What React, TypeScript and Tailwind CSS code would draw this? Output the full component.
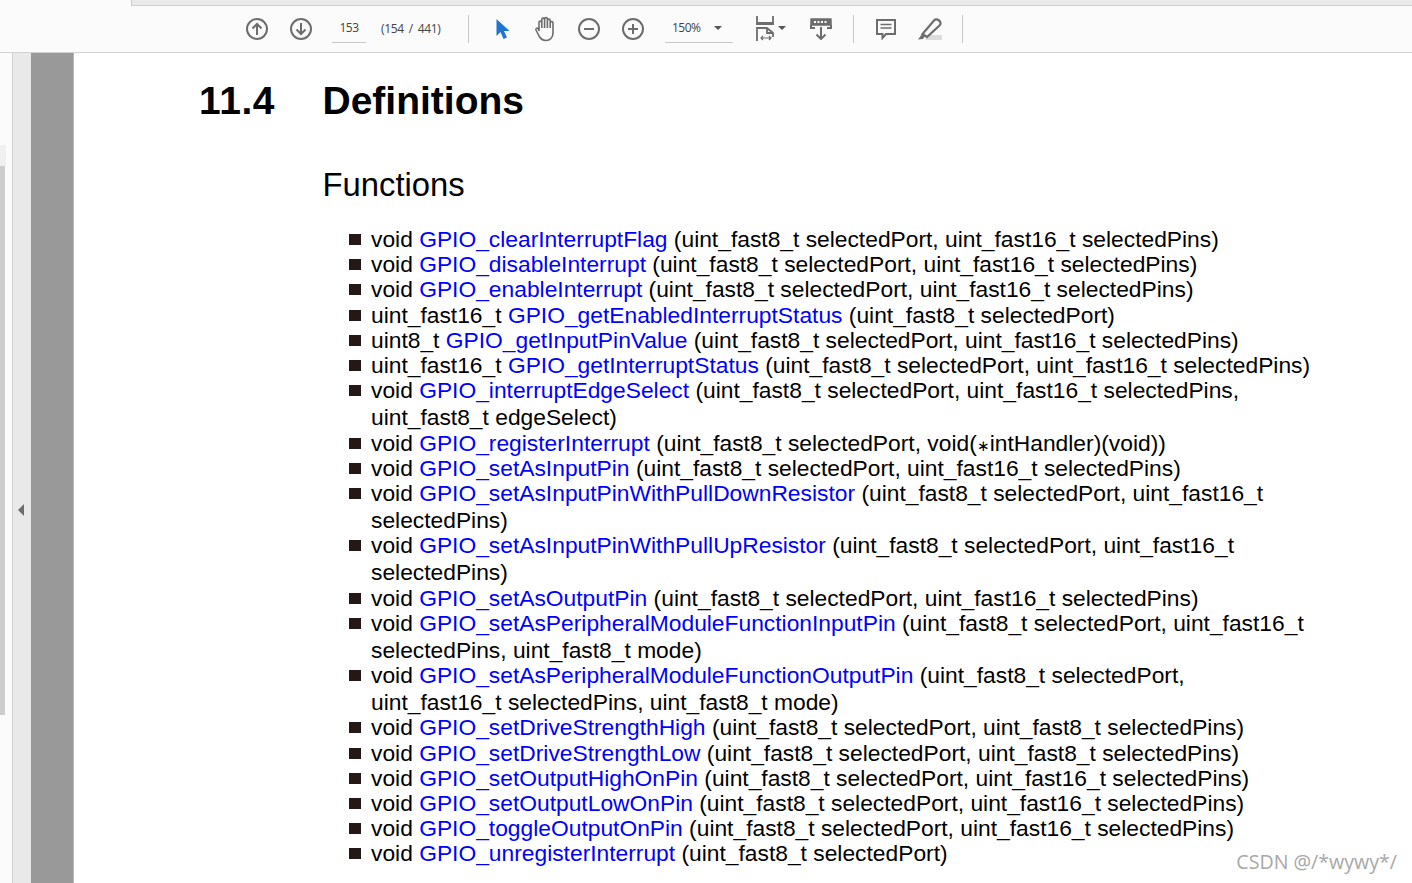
import React from 'react';

type Fn = { pre: string; name: string; rest: React.ReactNode; more?: string };

const fns: Fn[] = [
  { pre: 'void', name: 'GPIO_clearInterruptFlag', rest: '(uint_fast8_t selectedPort, uint_fast16_t selectedPins)' },
  { pre: 'void', name: 'GPIO_disableInterrupt', rest: '(uint_fast8_t selectedPort, uint_fast16_t selectedPins)' },
  { pre: 'void', name: 'GPIO_enableInterrupt', rest: '(uint_fast8_t selectedPort, uint_fast16_t selectedPins)' },
  { pre: 'uint_fast16_t', name: 'GPIO_getEnabledInterruptStatus', rest: '(uint_fast8_t selectedPort)' },
  { pre: 'uint8_t', name: 'GPIO_getInputPinValue', rest: '(uint_fast8_t selectedPort, uint_fast16_t selectedPins)' },
  { pre: 'uint_fast16_t', name: 'GPIO_getInterruptStatus', rest: '(uint_fast8_t selectedPort, uint_fast16_t selectedPins)' },
  { pre: 'void', name: 'GPIO_interruptEdgeSelect', rest: '(uint_fast8_t selectedPort, uint_fast16_t selectedPins,', more: 'uint_fast8_t edgeSelect)' },
  { pre: 'void', name: 'GPIO_registerInterrupt', rest: <>(uint_fast8_t selectedPort, void(<span className="text-[15px] leading-[0]">∗</span>intHandler)(void))</> },
  { pre: 'void', name: 'GPIO_setAsInputPin', rest: '(uint_fast8_t selectedPort, uint_fast16_t selectedPins)' },
  { pre: 'void', name: 'GPIO_setAsInputPinWithPullDownResistor', rest: '(uint_fast8_t selectedPort, uint_fast16_t', more: 'selectedPins)' },
  { pre: 'void', name: 'GPIO_setAsInputPinWithPullUpResistor', rest: '(uint_fast8_t selectedPort, uint_fast16_t', more: 'selectedPins)' },
  { pre: 'void', name: 'GPIO_setAsOutputPin', rest: '(uint_fast8_t selectedPort, uint_fast16_t selectedPins)' },
  { pre: 'void', name: 'GPIO_setAsPeripheralModuleFunctionInputPin', rest: '(uint_fast8_t selectedPort, uint_fast16_t', more: 'selectedPins, uint_fast8_t mode)' },
  { pre: 'void', name: 'GPIO_setAsPeripheralModuleFunctionOutputPin', rest: '(uint_fast8_t selectedPort,', more: 'uint_fast16_t selectedPins, uint_fast8_t mode)' },
  { pre: 'void', name: 'GPIO_setDriveStrengthHigh', rest: '(uint_fast8_t selectedPort, uint_fast8_t selectedPins)' },
  { pre: 'void', name: 'GPIO_setDriveStrengthLow', rest: '(uint_fast8_t selectedPort, uint_fast8_t selectedPins)' },
  { pre: 'void', name: 'GPIO_setOutputHighOnPin', rest: '(uint_fast8_t selectedPort, uint_fast16_t selectedPins)' },
  { pre: 'void', name: 'GPIO_setOutputLowOnPin', rest: '(uint_fast8_t selectedPort, uint_fast16_t selectedPins)' },
  { pre: 'void', name: 'GPIO_toggleOutputOnPin', rest: '(uint_fast8_t selectedPort, uint_fast16_t selectedPins)' },
  { pre: 'void', name: 'GPIO_unregisterInterrupt', rest: '(uint_fast8_t selectedPort)' },
];

const Icon = ({ children, className = '' }: { children: React.ReactNode; className?: string }) => (
  <svg width="24" height="24" viewBox="0 0 24 24" fill="none" stroke="#6d6d6d" strokeWidth="2" className={className}>
    {children}
  </svg>
);

const Divider = ({ className }: { className: string }) => <div className={`w-px h-[28px] bg-[#c8c8c8] ${className}`} />;

const Toolbar = () => (
  <div className="h-[53px] shrink-0 bg-[#fbfbfb] border-b border-[#d2d2d2] flex flex-col">
    <div className="h-[6px] ml-[131px] bg-[#e9e9e9] border-b border-l border-[#cfcfcf]" />
    <div className="flex-1 flex items-center pl-[245px] pb-[1px] text-[#444] font-['Open_Sans',sans-serif] text-[12px]">
      <Icon>
        <circle cx="12" cy="12" r="10" />
        <path d="M12 18V7M7.500 11.500 12 7l4.500 4.500" />
      </Icon>
      <Icon className="ml-[20px]">
        <circle cx="12" cy="12" r="10" />
        <path d="M12 6v11M7.500 12.500 12 17l4.500-4.500" />
      </Icon>
      <div className="ml-[19px] w-[34px] h-[28px] border-b border-[#c8c8c8] flex items-center justify-center tracking-[-0.5px]">153</div>
      <div className="ml-[15px] w-[60px] whitespace-nowrap tracking-[-0.3px] [word-spacing:2px]">(154 / 441)</div>
      <Divider className="ml-[27px]" />
      <svg width="16" height="22" viewBox="0 0 16 22" className="ml-[26px]">
        <path d="M1.500 1v17l4-4 3 7 3.500-1.500-3-6.500h5.500z" fill="#1f74cf" />
      </svg>
      <svg width="24" height="26" viewBox="0 0 24 26" fill="none" stroke="#6d6d6d" strokeWidth="1.600" className="ml-[22px]">
        <path d="M6 15V6.500a1.400 1.400 0 0 1 2.800 0V12M8.800 12V3.500a1.400 1.400 0 0 1 2.800 0V12M11.600 12V3a1.400 1.400 0 0 1 2.800 0v9M14.400 12V4.500a1.400 1.400 0 0 1 2.800 0V12M17.200 12V7a1.400 1.400 0 0 1 2.800 0v10c0 4.500-3 7.500-7 7.500-3.500 0-5.500-1.800-7-4.500l-3-6c-.6-1.500 1.300-2.500 2.300-1.300L6 15" />
      </svg>
      <Icon className="ml-[20px]">
        <circle cx="12" cy="12" r="10" />
        <path d="M7 12h10" />
      </Icon>
      <Icon className="ml-[20px]">
        <circle cx="12" cy="12" r="10" />
        <path d="M7 12h10M12 7v10" />
      </Icon>
      <div className="ml-[20px] w-[68px] h-[28px] border-b border-[#c8c8c8] flex items-center justify-between pl-[7px] pr-[11px] tracking-[-0.5px]">
        <span>150%</span>
        <span className="w-0 h-0 border-x-[4px] border-x-transparent border-t-[4px] border-t-[#555]" />
      </div>
      <svg width="18" height="25" viewBox="0 0 18 25" fill="none" stroke="#6d6d6d" strokeWidth="1.800" className="ml-[23px]">
        <path d="M1 0v7h16V0M0 8h18" />
        <path d="M1 25V12h10l6 5v4M11 12v5h6" />
        <path d="M5 22h10M7 20l-2 2 2 2M13 20l2 2-2 2" strokeWidth="1.200" />
      </svg>
      <span className="ml-[4px] mb-[1px] w-0 h-0 border-x-[4px] border-x-transparent border-t-[4px] border-t-[#555]" />
      <svg width="24" height="22" viewBox="0 0 24 22" fill="none" stroke="#6d6d6d" className="ml-[23px]">
        <path d="M2 1h20v6H2z" fill="#6d6d6d" strokeWidth="1.500" strokeLinejoin="round" />
        <path d="M5 4h14" stroke="#fbfbfb" strokeWidth="2" strokeDasharray="2 1.500" />
        <path d="M2 7v3h4M22 7v3h-4M12 9v12M7.500 16.500 12 21l4.500-4.500" strokeWidth="2" />
      </svg>
      <Divider className="ml-[20px]" />
      <svg width="22" height="22" viewBox="0 0 22 22" fill="none" stroke="#6d6d6d" strokeWidth="2" className="ml-[21px]">
        <path d="M2 2h18v14h-9l-3.500 4v-4H2z" />
        <path d="M5.500 6.500h11M5.500 10h11" strokeWidth="1.400" />
      </svg>
      <svg width="24" height="22" viewBox="0 0 24 22" className="ml-[21px]">
        <path d="M7 22h17v-5H10z" fill="#dcdcdc" />
        <path d="M0 21.500l5-.5 2-3-3-2z" fill="#6d6d6d" />
        <path d="M4.500 16 16 2.500c1.500-1.500 3-1.500 5 0s2 3.500.5 5L9 19z" fill="#fbfbfb" stroke="#6d6d6d" strokeWidth="2.200" />
      </svg>
      <Divider className="ml-[20px]" />
    </div>
  </div>
);

const Sidebar = () => (
  <div className="w-[74px] shrink-0 flex">
    <div className="w-[12px] bg-[#fbfbfb] flex flex-col">
      <div className="w-[6px] mt-[92px] h-[21px] bg-[#f0f0f0]" />
      <div className="w-[5px] h-[549px] bg-[#cdcdcd]" />
    </div>
    <div className="w-[19px] bg-[#e9e9e9] border-l border-[#cfcfcf] flex items-center pl-[5px] pt-[83px]">
      <span className="w-0 h-0 border-y-[6px] border-y-transparent border-r-[6px] border-r-[#6d6d6d]" />
    </div>
    <div className="w-[43px] bg-[#999999] border-r border-[#b5b5b5]" />
  </div>
);

export default function App() {
  return (
    <div className="relative w-[1412px] h-[883px] overflow-hidden flex flex-col bg-white font-['Liberation_Sans',Arial,sans-serif] text-black">
      <Toolbar />
      <div className="flex-1 flex min-h-0">
        <Sidebar />
        <main className="flex-1 min-w-0 pl-[125px] pt-[24px]">
          <h1 className="flex font-bold text-[39px] leading-[48px] whitespace-nowrap">
            <span className="w-[123.500px] tracking-[0.6px]">11.4</span>
            <span>Definitions</span>
          </h1>
          <h2 className="ml-[123.500px] mt-[40px] text-[32.800px] leading-[40px]">Functions</h2>
          <ul className="ml-[150px] mt-[21px] text-[22.800px] leading-[27px]">
            {fns.map((f) => (
              <li key={f.name} className="flex mb-[-1.780px] whitespace-nowrap">
                <span className="w-[12px] h-[11px] mt-[8px] bg-[#231815] shrink-0" />
                <span className="ml-[10px]">
                  {f.pre} <span className="text-[#0000ff]">{f.name}</span> {f.rest}
                  {f.more && (
                    <>
                      <br />
                      {f.more}
                    </>
                  )}
                </span>
              </li>
            ))}
          </ul>
        </main>
      </div>
      <div className="absolute right-[15px] bottom-[8px] text-[19.600px] leading-[26px] text-[#a8a8a8] font-['Open_Sans',sans-serif]">CSDN @/*wywy*/</div>
    </div>
  );
}
